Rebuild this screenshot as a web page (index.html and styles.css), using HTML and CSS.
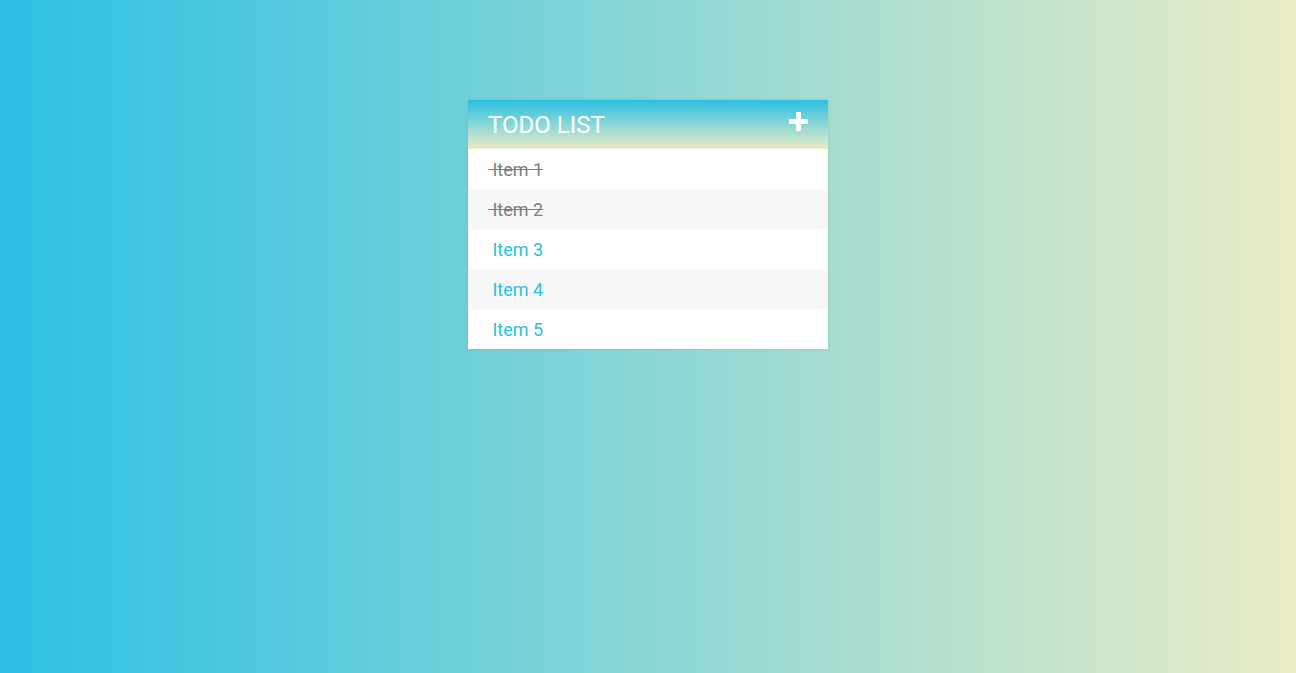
FILE: index.html
```html
<!DOCTYPE html>
<html>
<head>
<meta charset="utf-8">
<link rel="stylesheet" href="styles.css">
<title>Todo List</title>
</head>
<body>
<div class="container">
  <h1 class="title">TODO LIST <span class="add"><svg width="19" height="19" viewBox="0 0 19 19"><path d="M7 0h5v7h7v5h-7v7h-5v-7h-7v-5h7z" fill="#fff"/></svg></span></h1>
  <ul class="list">
    <li class="done"><span>&nbsp;Item 1</span></li>
    <li class="done"><span>&nbsp;Item 2</span></li>
    <li><span>&nbsp;Item 3</span></li>
    <li><span>&nbsp;Item 4</span></li>
    <li><span>&nbsp;Item 5</span></li>
  </ul>
</div>
</body>
</html>
```
FILE: styles.css
```css
html, body {
  margin: 0;
  height: 100%;
}
body {
  background: linear-gradient(to right, #2bc0e4, #eaecc6);
  font-family: Roboto, "Liberation Sans", sans-serif;
  overflow: hidden;
}
.container {
  width: 360px;
  margin: 100px auto 0;
  background: #fff;
  box-shadow: 0 0 3px rgba(0, 0, 0, 0.1);
}
.title {
  margin: 0;
  padding: 11px 20px 9px;
  font-size: 24px;
  line-height: 29px;
  font-weight: 400;
  color: #fff;
  background: linear-gradient(to bottom, #2bc0e4, #eaecc6);
  display: flex;
  justify-content: space-between;
  align-items: flex-start;
}
.add {
  display: flex;
  padding-top: 1px;
}
.list {
  list-style: none;
  margin: 0;
  padding: 0;
}
.list li {
  height: 40px;
  box-sizing: border-box;
  padding-top: 2px;
  line-height: 38px;
  font-size: 18px;
  padding-left: 20px;
  color: #2bc0e4;
  background: #fff;
}
.list li:nth-child(2n) {
  background: #f7f7f7;
}
.list li.done {
  color: gray;
  text-decoration: line-through;
}
```
